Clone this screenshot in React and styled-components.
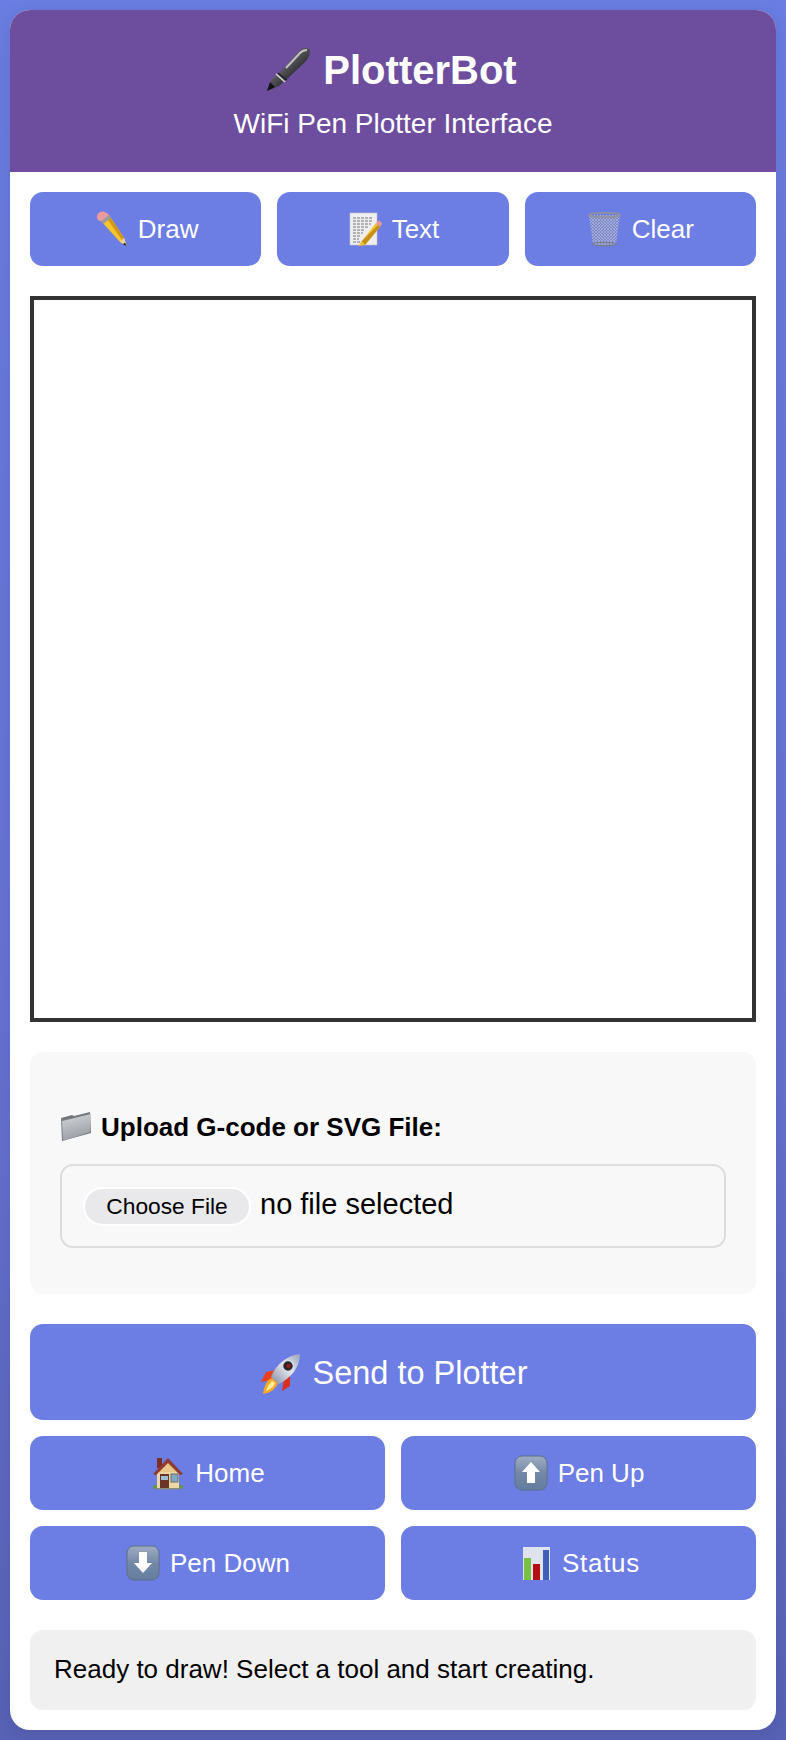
import React from "react";
import styled, { createGlobalStyle } from "styled-components";

const PenIcon = () => (
  <svg viewBox="0 0 44 44" width="44" height="44">
    <defs>
      <linearGradient id="penBody" x1="0.2" y1="0.2" x2="0.8" y2="0.8">
        <stop offset="0" stopColor="#a9a9ad" />
        <stop offset="0.4" stopColor="#55555a" />
        <stop offset="1" stopColor="#111114" />
      </linearGradient>
    </defs>
    <path d="M1 43 L5 32 L13 25 L32 4 C35 0 40 -1 43 1 C45 4 43 10 39 14 L20 32 L13 38 Z" fill="url(#penBody)" />
    <path d="M10 26 L19 34" stroke="#d5d5d8" strokeWidth="1.6" />
    <path d="M12 25 L21 32" stroke="#1d1d20" strokeWidth="1.2" />
    <path d="M1 43 L4 34 L9 39 Z" fill="#121216" />
    <path d="M20 20 L34 5 C37 2 39 2 41 2" stroke="#e6e6ea" strokeWidth="2" fill="none" opacity="0.75" />
  </svg>
);

const PencilIcon = () => (
  <svg viewBox="0 0 36 36" width="36" height="36">
    <path d="M8 10 L16 4 L31 27 L34 35 L27 31 Z" fill="#f2c52c" />
    <path d="M13 6 L16 4 L31 27 L29 29 Z" fill="#d39516" />
    <path d="M27 31 L31 27 L34 35 Z" fill="#e8cfa0" />
    <path d="M32 31.5 L34 35 L30 33.5 Z" fill="#2b2b2b" />
    <path d="M8 10 L16 4 L18 7 L10 13 Z" fill="#9b9ba1" />
    <path d="M4 7 C3 3 7 0 10 0.5 C13 1 15 3 16 4 L8 10 C6 10 4.5 9 4 7 Z" fill="#eb9a9f" />
  </svg>
);

const MemoIcon = () => (
  <svg viewBox="0 0 36 36" width="36" height="36">
    <rect x="3" y="2" width="27" height="32" fill="#eeeeef" stroke="#c6c6cc" strokeWidth="0.6" />
    <path
      d="M6 7 H26 M6 10 H25 M6 13 H24 M6 16 H22 M6 19 H18 M6 22 H16 M6 25 H13 M6 28 H12 M6 31 H16"
      stroke="#6a6a72"
      strokeWidth="0.9"
      strokeDasharray="3 1"
    />
    <path d="M15 30 L11 35 L18 34 L33 16 L29 12 Z" fill="#f0c22e" />
    <path d="M15 30 L18 34 L33 16 L31 14 Z" fill="#c88f18" />
    <path d="M29 12 L31 10 C32 9 35 11 35 13 L33 16 Z" fill="#e8949a" />
  </svg>
);

const TrashIcon = () => (
  <svg viewBox="0 0 36 36" width="36" height="36">
    <defs>
      <pattern id="mesh" width="3" height="3" patternUnits="userSpaceOnUse">
        <rect width="3" height="3" fill="#7d88c8" />
        <path d="M0 0 L3 3 M3 0 L0 3" stroke="#b5bce2" strokeWidth="0.6" />
      </pattern>
    </defs>
    <path d="M2 4 H33 L29 33 C24 35 11 35 6 33 Z" fill="url(#mesh)" />
    <ellipse cx="17.5" cy="4" rx="15.5" ry="2.2" fill="none" stroke="#8f939f" strokeWidth="1.8" />
    <ellipse cx="17.5" cy="33" rx="11.5" ry="1.6" fill="none" stroke="#777b8c" strokeWidth="1.4" />
  </svg>
);

const FolderIcon = () => (
  <svg viewBox="0 0 32 32" width="32" height="32">
    <defs>
      <linearGradient id="folderFront" x1="0" y1="0" x2="0.3" y2="1">
        <stop offset="0" stopColor="#d4d6da" />
        <stop offset="1" stopColor="#9a9ea5" />
      </linearGradient>
    </defs>
    <path d="M1 7 L12 4 L14 5 L30 1 L31 22 L2 30 Z" fill="#74777d" />
    <path d="M2 10 L31 3 L30 21 L3 30 Z" fill="url(#folderFront)" />
  </svg>
);

const RocketIcon = () => (
  <svg viewBox="0 0 44 44" width="44" height="44">
    <defs>
      <linearGradient id="rocketBody" x1="0" y1="1" x2="1" y2="0">
        <stop offset="0" stopColor="#7f89a2" />
        <stop offset="0.55" stopColor="#e6e8ef" />
        <stop offset="1" stopColor="#97a3b8" />
      </linearGradient>
    </defs>
    <path d="M17 20 L7 22 L2 32 L13 30 Z" fill="#e8431c" />
    <path d="M25 29 L23 41 L31 36 L31 24 Z" fill="#d92f1c" />
    <path d="M13 28 C7 30 5 37 4 44 C11 43 17 39 19 33 Z" fill="#f7a928" />
    <path d="M13 31 C10 34 8 38 7 41 C11 39 15 37 16 33 Z" fill="#fff0a0" />
    <path d="M12 27 C17 14 29 5 41 4 C41 17 32 28 20 34 Z" fill="url(#rocketBody)" />
    <circle cx="29" cy="16" r="5.5" fill="#24262e" stroke="#d8dbe3" strokeWidth="1.6" />
    <circle cx="29.5" cy="16" r="2.4" fill="#86201f" />
  </svg>
);

const HouseIcon = () => (
  <svg viewBox="0 0 36 36" width="36" height="36">
    <rect x="7" y="3" width="5" height="10" fill="#7a2f28" />
    <path d="M7 15 H29 V33 H7 Z" fill="#eed7a6" />
    <path d="M6 19 L18 7 L30 19 L28 17 H8 Z" fill="#e9c88a" />
    <path d="M3 19 L18 3 L33 19 L30 20 L18 8 L6 20 Z" fill="#8f3a30" />
    <rect x="10" y="19" width="9" height="14" fill="#6a3526" />
    <rect x="11" y="21" width="7" height="4" fill="#9fc0d4" />
    <rect x="21" y="19" width="7" height="8" fill="#7fa9c8" stroke="#6f6b62" strokeWidth="1" />
    <rect x="7" y="33" width="22" height="1.5" fill="#8b8b84" />
    <circle cx="5" cy="32" r="2" fill="#5f9a3a" />
    <circle cx="31" cy="32" r="2" fill="#5f9a3a" />
  </svg>
);

const ArrowIcon = ({ $down }) => (
  <svg viewBox="0 0 36 36" width="36" height="36">
    <defs>
      <linearGradient id={$down ? "keyDown" : "keyUp"} x1="0" y1="0" x2="0" y2="1">
        <stop offset="0" stopColor="#9fadc2" />
        <stop offset="0.5" stopColor="#7489a8" />
        <stop offset="1" stopColor="#647c9e" />
      </linearGradient>
    </defs>
    <rect x="2" y="1" width="32" height="34" rx="7" fill={`url(#${$down ? "keyDown" : "keyUp"})`} stroke="#5f7088" strokeWidth="1" />
    <path
      d={$down ? "M14 7 H22 V18 H27 L18 28 L9 18 H14 Z" : "M18 7 L27 17 H22 V28 H14 V17 H9 Z"}
      fill="#ffffff"
    />
  </svg>
);

const ChartIcon = () => (
  <svg viewBox="0 0 36 36" width="36" height="36">
    <rect x="6" y="2" width="27" height="33" fill="#dfe3ee" />
    <rect x="7" y="13" width="7" height="22" fill="#79c142" />
    <rect x="16" y="19" width="7" height="16" fill="#b40d12" />
    <rect x="26" y="5" width="6" height="30" fill="#3f5fb8" />
  </svg>
);

const App = () => {
  return (
    <>
      <GlobalStyle />
      <Card>
        <Header>
          <Title>
            <TitleIcon>
              <PenIcon />
            </TitleIcon>
            PlotterBot
          </Title>
          <Subtitle>WiFi Pen Plotter Interface</Subtitle>
        </Header>
        <Body>
          <Toolbar>
            <Button>
              <Icon><PencilIcon /></Icon>
              Draw
            </Button>
            <Button>
              <Icon><MemoIcon /></Icon>
              Text
            </Button>
            <Button>
              <Icon><TrashIcon /></Icon>
              Clear
            </Button>
          </Toolbar>
          <DrawArea width="718" height="718" />
          <UploadSection>
            <UploadLabel>
              <LabelIcon><FolderIcon /></LabelIcon>
              Upload G-code or SVG File:
            </UploadLabel>
            <FileBox>
              <ChooseButton>Choose File</ChooseButton>
              <FileName>no file selected</FileName>
            </FileBox>
          </UploadSection>
          <Controls>
            <SendButton>
              <SendIcon><RocketIcon /></SendIcon>
              <SendLabel>Send to Plotter</SendLabel>
            </SendButton>
            <ControlGrid>
              <Button>
                <Icon><HouseIcon /></Icon>
                Home
              </Button>
              <Button>
                <Icon><ArrowIcon /></Icon>
                Pen Up
              </Button>
              <Button>
                <Icon><ArrowIcon $down /></Icon>
                Pen Down
              </Button>
              <Button $spaced>
                <Icon><ChartIcon /></Icon>
                Status
              </Button>
            </ControlGrid>
          </Controls>
          <StatusBar>Ready to draw! Select a tool and start creating.</StatusBar>
        </Body>
      </Card>
    </>
  );
};

export default App;

const GlobalStyle = createGlobalStyle`
  html, body {
    margin: 0;
    padding: 0;
  }

  body {
    padding: 10px;
    box-sizing: border-box;
    min-height: 1740px;
    background: linear-gradient(180deg, #6a7de2 0%, #6672d2 60%, #5862b6 100%);
    font-family: "Liberation Sans", Arial, sans-serif;
  }
`;

const Card = styled.div`
  background: #ffffff;
  border-radius: 20px;
  overflow: hidden;
  box-shadow: 0 4px 20px rgba(0, 0, 0, 0.1);
`;

const Header = styled.div`
  height: 162px;
  box-sizing: border-box;
  padding-top: 37px;
  background: #6c4d9e;
  color: #ffffff;
  text-align: center;
`;

const Title = styled.h1`
  display: flex;
  justify-content: center;
  align-items: center;
  margin: 0;
  height: 46px;
  font-size: 40px;
  font-weight: bold;
`;

const TitleIcon = styled.span`
  display: flex;
  margin: 0 13px 0 -3px;
`;

const Subtitle = styled.div`
  margin-top: 15px;
  font-size: 28px;
  line-height: 32px;
`;

const Body = styled.div`
  display: flex;
  flex-direction: column;
  gap: 30px;
  padding: 20px;
`;

const Toolbar = styled.div`
  display: grid;
  grid-template-columns: repeat(3, 1fr);
  gap: 16px;
`;

const Button = styled.button`
  display: flex;
  justify-content: center;
  align-items: center;
  height: 74px;
  padding: 0;
  border: none;
  border-radius: 13px;
  background: #6c7de3;
  color: #ffffff;
  font-family: inherit;
  font-size: 26px;
  letter-spacing: ${(props) => (props.$spaced ? "0.7px" : "normal")};
  cursor: pointer;
`;

const Icon = styled.span`
  display: flex;
  margin-right: 9px;
`;

const DrawArea = styled.canvas`
  display: block;
  width: 726px;
  height: 726px;
  box-sizing: border-box;
  border: 4px solid #333333;
  background: #ffffff;
`;

const UploadSection = styled.div`
  height: 242px;
  box-sizing: border-box;
  padding: 60px 30px 0;
  background: #f8f8f8;
  border-radius: 13px;
`;

const UploadLabel = styled.div`
  display: flex;
  align-items: center;
  height: 30px;
  margin-bottom: 22px;
  font-size: 26px;
  font-weight: bold;
  color: #000000;
`;

const LabelIcon = styled.span`
  display: flex;
  margin-right: 9px;
`;

const FileBox = styled.div`
  display: flex;
  align-items: center;
  height: 84px;
  box-sizing: border-box;
  padding: 0 21px;
  border: 2px solid #dddddd;
  border-radius: 13px;
`;

const ChooseButton = styled.span`
  display: flex;
  justify-content: center;
  align-items: center;
  width: 168px;
  height: 39px;
  box-sizing: border-box;
  margin-right: 9px;
  border: 2px solid #ffffff;
  border-radius: 20px;
  background: #e9e9eb;
  font-size: 22.75px;
  color: #000000;
`;

const FileName = styled.span`
  margin-bottom: 4px;
  font-size: 29px;
  color: #000000;
`;

const Controls = styled.div`
  display: flex;
  flex-direction: column;
  gap: 16px;
`;

const SendButton = styled(Button)`
  height: 96px;
  font-size: 32.5px;
`;

const SendIcon = styled.span`
  display: flex;
  margin-right: 10px;
`;

const SendLabel = styled.span`
  margin-top: 2px;
`;

const ControlGrid = styled.div`
  display: grid;
  grid-template-columns: 1fr 1fr;
  gap: 16px;
`;

const StatusBar = styled.div`
  display: flex;
  align-items: center;
  height: 80px;
  box-sizing: border-box;
  padding: 0 24px 2px;
  border-radius: 13px;
  background: #f0f0f0;
  font-size: 26px;
  color: #000000;
`;
